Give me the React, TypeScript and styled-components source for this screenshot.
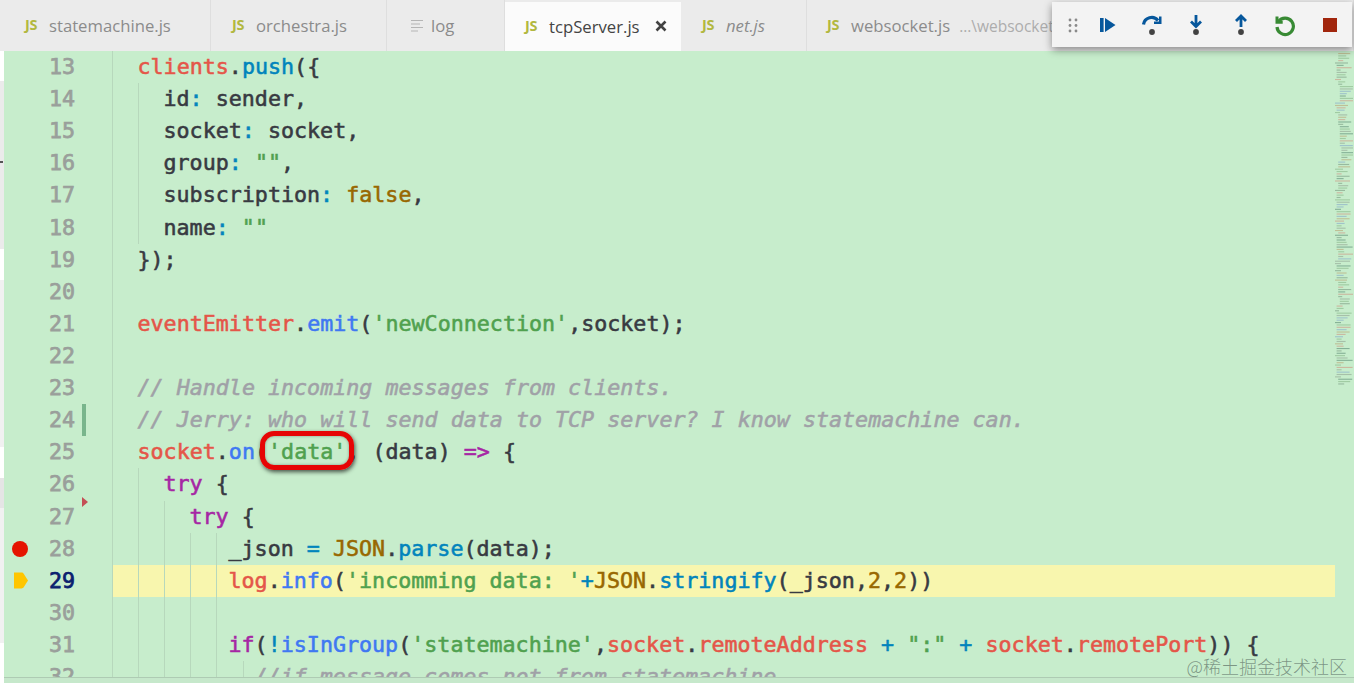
import React from 'react';
import styled, { createGlobalStyle } from 'styled-components';

const GlobalStyle = createGlobalStyle`
  html, body {
    margin: 0;
    padding: 0;
    background: #c7edcc;
    overflow: hidden;
  }
`;

const Page = styled.div`
  position: relative;
  width: 1354px;
  height: 683px;
  display: flex;
  flex-direction: column;
  overflow: hidden;
`;

const TabBar = styled.div`
  height: 51px;
  flex: none;
  display: flex;
  background: #ebebeb;
`;

const Tab = styled.div<{ $width: number; $active?: boolean; $pad?: number }>`
  width: ${(p) => p.$width}px;
  box-sizing: border-box;
  padding: 0 0 0 ${(p) => p.$pad ?? 21}px;
  margin-top: ${(p) => (p.$active ? 2 : 0)}px;
  flex: none;
  display: flex;
  align-items: center;
  overflow: hidden;
  white-space: nowrap;
  background: ${(p) => (p.$active ? '#fbfbfb' : '#ebebeb')};
  border-right: 1px solid ${(p) => (p.$active ? '#fbfbfb' : '#dedede')};
  font-family: 'Open Sans', sans-serif;
  font-size: 16.7px;
  color: ${(p) => (p.$active ? '#444444' : '#8b8b8b')};
`;

const JsBadge = styled.span`
  width: 14px;
  margin-right: 10px;
  font-family: 'Open Sans', sans-serif;
  font-size: 14.5px;
  font-weight: 700;
  letter-spacing: -0.4px;
  color: #b2b83f;
  position: relative;
  top: -1px;
`;

const TabName = styled.span<{ $italic?: boolean }>`
  font-style: ${(p) => (p.$italic ? 'italic' : 'normal')};
`;

const TabPath = styled.span`
  margin-left: 9px;
  font-size: 15.5px;
  color: #adadad;
`;

const CloseIcon = styled.svg`
  width: 12px;
  height: 12px;
  margin-left: 15px;
  flex: none;
  position: relative;
  top: -1px;
`;

const LogIcon = styled.svg`
  width: 12px;
  height: 14px;
  margin-right: 8px;
  flex: none;
`;

const Workbench = styled.div`
  flex: 1;
  min-height: 0;
  display: flex;
  position: relative;
`;

const SideStrip = styled.div`
  width: 4px;
  flex: none;
  position: relative;
  display: flex;
  flex-direction: column;
`;

const StripPart = styled.div<{ $h: number; $c: string }>`
  flex: none;
  height: ${(p) => p.$h}px;
  background: ${(p) => p.$c};
`;

const StripTick = styled.div`
  position: absolute;
  left: 0;
  top: 110px;
  width: 3px;
  height: 2px;
  background: #555555;
`;

const EditorColumn = styled.div`
  flex: 1;
  min-width: 0;
  display: flex;
  flex-direction: column;
`;

const Editor = styled.div`
  height: 626px;
  flex: none;
  display: flex;
  overflow: hidden;
  background: #c7edcc;
`;

const BottomEdge = styled.div`
  flex: 1;
  background: #c6e8cb;
  border-top: 1px solid #aecbb3;
`;

const Lines = styled.div`
  flex: 1;
  min-width: 0;
`;

const Row = styled.div`
  height: 32.11px;
  display: flex;
  position: relative;
`;

const Gutter = styled.div`
  width: 107.5px;
  flex: none;
  display: flex;
  align-items: stretch;
`;

const GlyphCell = styled.div`
  width: 33px;
  flex: none;
  display: flex;
  align-items: center;
  justify-content: center;
  padding-right: 1px;
  box-sizing: border-box;
`;

const BreakpointDot = styled.div`
  width: 16px;
  height: 16px;
  border-radius: 50%;
  background: #e51400;
`;

const CurrentArrow = styled.svg`
  width: 16px;
  height: 17px;
  position: relative;
  left: 1px;
`;

const LineNumber = styled.div<{ $current?: boolean }>`
  width: 38px;
  flex: none;
  text-align: right;
  font-family: 'DejaVu Sans Mono', monospace;
  font-size: 21.65px;
  line-height: 32px;
  color: ${(p) => (p.$current ? '#0b216f' : '#9a9f9b')};
  -webkit-text-stroke: 0.75px ${(p) => (p.$current ? '#0b216f' : '#9a9f9b')};
`;

const MarkerCell = styled.div`
  flex: 1;
  padding-left: 7px;
  position: relative;
`;

const ChangeBar = styled.div`
  width: 4px;
  height: 100%;
  background: #79b58c;
`;

const FoldedMark = styled.div`
  position: absolute;
  left: 7px;
  bottom: -6px;
  width: 0;
  height: 0;
  border-left: 6px solid #c44f55;
  border-top: 5.5px solid transparent;
  border-bottom: 5.5px solid transparent;
  z-index: 2;
`;

const Code = styled.div<{ $current?: boolean }>`
  flex: 1;
  min-width: 0;
  display: flex;
  white-space: pre;
  font-family: 'DejaVu Sans Mono', monospace;
  font-size: 21.68px;
  line-height: 32px;
  background: ${(p) => (p.$current ? '#f8f6ae' : 'transparent')};
  -webkit-text-stroke: 0.55px currentColor;
`;

const Indent = styled.span<{ $w: number }>`
  width: ${(p) => p.$w}px;
  flex: none;
  box-sizing: border-box;
  border-left: 1px solid #b7d8bc;
`;

const colors: Record<string, string> = {
  red: '#e45649',
  blue: '#4078f2',
  teal: '#0184bc',
  cyan: '#0184bc',
  green: '#50a14f',
  purple: '#a626a4',
  gold: '#986801',
  text: '#383a42',
  comment: '#a0a1a7',
};

const Token = styled.span<{ $kind: string }>`
  color: ${(p) => colors[p.$kind]};
  font-style: ${(p) => (p.$kind === 'comment' ? 'italic' : 'normal')};
`;

const Minimap = styled.svg`
  width: 19px;
  height: 626px;
  flex: none;
  display: block;
`;

const DebugToolbar = styled.div`
  position: absolute;
  left: 1052px;
  top: 2px;
  width: 300px;
  height: 45px;
  box-sizing: border-box;
  padding-left: 9px;
  display: flex;
  align-items: center;
  background: #f3f3f3;
  box-shadow: 0 3px 8px rgba(0, 0, 0, 0.42);
  z-index: 5;
`;

const ToolButton = styled.svg`
  width: 24px;
  height: 24px;
  flex: none;
  margin-right: 20.7px;
  position: relative;
  top: 0.5px;
`;

const GripIcon = styled.svg`
  width: 24px;
  height: 24px;
  flex: none;
  margin-right: 10px;
`;

const Callout = styled.div`
  position: absolute;
  left: 260px;
  top: 431px;
  width: 94px;
  height: 39px;
  box-sizing: border-box;
  border: 5px solid #e60505;
  border-radius: 14px;
  box-shadow: 1px 2px 4px rgba(0, 0, 0, 0.65), inset 0 0 3px rgba(0, 0, 0, 0.35);
  z-index: 3;
`;

const Watermark = styled.div`
  position: absolute;
  right: 7px;
  bottom: 5px;
  font-family: 'Noto Sans CJK SC', sans-serif;
  font-size: 18px;
  font-weight: 300;
  line-height: 24px;
  color: rgba(95, 115, 105, 0.72);
  z-index: 4;
`;

type Tok = [string, string];

interface Line {
  n: number;
  indent: number[];
  toks: Tok[];
  current?: boolean;
  breakpoint?: boolean;
  changed?: boolean;
  folded?: boolean;
}

const deep = [26, 26, 26, 26, 13];

const lines: Line[] = [
  { n: 13, indent: [26], toks: [['red', 'clients'], ['text', '.'], ['teal', 'push'], ['text', '({']] },
  { n: 14, indent: [26, 26], toks: [['text', 'id'], ['cyan', ':'], ['text', ' sender,']] },
  { n: 15, indent: [26, 26], toks: [['text', 'socket'], ['cyan', ':'], ['text', ' socket,']] },
  { n: 16, indent: [26, 26], toks: [['text', 'group'], ['cyan', ':'], ['text', ' '], ['green', '""'], ['text', ',']] },
  { n: 17, indent: [26, 26], toks: [['text', 'subscription'], ['cyan', ':'], ['text', ' '], ['gold', 'false'], ['text', ',']] },
  { n: 18, indent: [26, 26], toks: [['text', 'name'], ['cyan', ':'], ['text', ' '], ['green', '""']] },
  { n: 19, indent: [26], toks: [['text', '});']] },
  { n: 20, indent: [26], toks: [] },
  { n: 21, indent: [26], toks: [['red', 'eventEmitter'], ['text', '.'], ['blue', 'emit'], ['text', '('], ['green', "'newConnection'"], ['text', ',socket);']] },
  { n: 22, indent: [26], toks: [] },
  { n: 23, indent: [26], toks: [['comment', '// Handle incoming messages from clients.']] },
  { n: 24, indent: [26], changed: true, toks: [['comment', '// Jerry: who will send data to TCP server? I know statemachine can.']] },
  { n: 25, indent: [26], toks: [['red', 'socket'], ['text', '.'], ['blue', 'on'], ['text', '('], ['green', "'data'"], ['text', ', (data) '], ['purple', '=>'], ['text', ' {']] },
  { n: 26, indent: [26, 26], folded: true, toks: [['purple', 'try'], ['text', ' {']] },
  { n: 27, indent: [26, 26, 26], toks: [['purple', 'try'], ['text', ' {']] },
  { n: 28, indent: deep, breakpoint: true, toks: [['text', '_json '], ['cyan', '='], ['text', ' '], ['gold', 'JSON'], ['text', '.'], ['teal', 'parse'], ['text', '(data);']] },
  { n: 29, indent: deep, current: true, toks: [['red', 'log'], ['text', '.'], ['blue', 'info'], ['text', '('], ['green', "'incomming data: '"], ['cyan', '+'], ['gold', 'JSON'], ['text', '.'], ['teal', 'stringify'], ['text', '(_json,'], ['gold', '2'], ['text', ','], ['gold', '2'], ['text', '))']] },
  { n: 30, indent: deep, toks: [] },
  { n: 31, indent: deep, toks: [['purple', 'if'], ['text', '('], ['cyan', '!'], ['blue', 'isInGroup'], ['text', '('], ['green', "'statemachine'"], ['text', ','], ['red', 'socket'], ['text', '.'], ['red', 'remoteAddress'], ['text', ' '], ['cyan', '+'], ['text', ' '], ['green', '":"'], ['text', ' '], ['cyan', '+'], ['text', ' '], ['red', 'socket'], ['text', '.'], ['red', 'remotePort'], ['text', ')) {']] },
  { n: 32, indent: [26, 26, 26, 26, 27, 12], toks: [['comment', '//if message comes not from statemachine']] },
];

// blocks of the minimap: [indent, length], 0 length means a blank gap
const miniBlocks = [
  [2, 4], [0, 1], [1, 6], [0, 1], [2, 2], [3, 7], [0, 2], [1, 2], [0, 1], [2, 5], [3, 9], [4, 6], [2, 3], [0, 1],
  [1, 4], [0, 1], [2, 3], [0, 1], [1, 3], [0, 1], [1, 3], [0, 1], [1, 4], [0, 1], [1, 3], [0, 1], [2, 1], [0, 1],
  [1, 6], [2, 4], [0, 2], [1, 2], [0, 1], [1, 3], [0, 1], [2, 7], [3, 3], [1, 2], [0, 1], [1, 4], [0, 1], [1, 5],
  [0, 1], [1, 2], [0, 1], [1, 4], [0, 1], [1, 3], [0, 1], [1, 4], [0, 1], [2, 3],
];
const miniColors = ['#6f8f78', '#4f7f6a', '#d08a7a', '#7da0c8', '#7fae7f', '#8a9a8c', '#b79a6a'];

const miniRects = () => {
  const rects: { x: number; y: number; w: number; c: string }[] = [];
  let y = 2;
  let seed = 7;
  miniBlocks.forEach(([indent, len]) => {
    for (let i = 0; i < len; i++) {
      seed = (seed * 31 + 11) % 97;
      const x = indent * 1.6;
      const w = Math.min(4 + (seed % 13), 18 - x);
      rects.push({ x, y, w, c: miniColors[seed % miniColors.length] });
      y += 2.36;
    }
    if (len === 0) y += 2.6;
  });
  return rects;
};

const App = () => (
  <Page>
    <GlobalStyle />
    <TabBar>
      <Tab $width={211} $pad={25}>
        <JsBadge>JS</JsBadge>
        <TabName>statemachine.js</TabName>
      </Tab>
      <Tab $width={176} $pad={21}>
        <JsBadge>JS</JsBadge>
        <TabName>orchestra.js</TabName>
      </Tab>
      <Tab $width={118} $pad={24}>
        <LogIcon viewBox="0 0 12 14">
          <path d="M0 1.5h12M0 5h9M0 8.5h12M0 12h7" stroke="#b5b5b5" strokeWidth="1.2" fill="none" />
        </LogIcon>
        <TabName>log</TabName>
      </Tab>
      <Tab $width={176} $active $pad={20}>
        <JsBadge>JS</JsBadge>
        <TabName>tcpServer.js</TabName>
        <CloseIcon viewBox="0 0 12 12">
          <path d="M1.5 1.5l9 9M10.5 1.5l-9 9" stroke="#424242" strokeWidth="2.6" fill="none" />
        </CloseIcon>
      </Tab>
      <Tab $width={126} $pad={21}>
        <JsBadge>JS</JsBadge>
        <TabName $italic>net.js</TabName>
      </Tab>
      <Tab $width={547} $pad={20}>
        <JsBadge>JS</JsBadge>
        <TabName>websocket.js</TabName>
        <TabPath>...\websocket</TabPath>
      </Tab>
    </TabBar>

    <Workbench>
      <SideStrip>
        <StripPart $h={30} $c="#ffffff" />
        <StripPart $h={168} $c="#ebebeb" />
        <StripPart $h={31} $c="#ffffff" />
        <StripPart $h={167} $c="#f1f1f1" />
        <StripPart $h={31} $c="#ffffff" />
        <StripPart $h={30} $c="#e5e5e5" />
        <StripPart $h={135} $c="#f1f1f1" />
        <StripPart $h={40} $c="#ffffff" />
        <StripTick />
      </SideStrip>
      <EditorColumn>
        <Editor>
          <Lines>
            {lines.map((line) => (
              <Row key={line.n}>
                <Gutter>
                  <GlyphCell>
                    {line.breakpoint && <BreakpointDot />}
                    {line.current && (
                      <CurrentArrow viewBox="0 0 16 16">
                        <path d="M1 0h7.5c1 0 1.7.5 2.2 1.2L15 8l-4.3 6.8c-.5.7-1.2 1.2-2.2 1.2H1z" fill="#ffc600" />
                      </CurrentArrow>
                    )}
                  </GlyphCell>
                  <LineNumber $current={line.current}>{line.n}</LineNumber>
                  <MarkerCell>
                    {line.changed && <ChangeBar />}
                    {line.folded && <FoldedMark />}
                  </MarkerCell>
                </Gutter>
                <Code $current={line.current}>
                  {line.indent.map((w, i) => (
                    <Indent key={i} $w={w} />
                  ))}
                  <span>
                    {line.toks.map(([kind, text], i) => (
                      <Token key={i} $kind={kind}>
                        {text}
                      </Token>
                    ))}
                  </span>
                </Code>
              </Row>
            ))}
          </Lines>
          <Minimap viewBox="0 0 19 626">
            {miniRects().map((r, i) => (
              <rect key={i} x={r.x} y={r.y} width={r.w} height={1.1} fill={r.c} opacity={0.55} />
            ))}
          </Minimap>
        </Editor>
        <BottomEdge />
      </EditorColumn>
    </Workbench>

    <DebugToolbar>
      <GripIcon viewBox="0 0 24 24">
        <g fill="#8a8a8a">
          <circle cx="9" cy="7" r="1.4" />
          <circle cx="15" cy="7" r="1.4" />
          <circle cx="9" cy="12.5" r="1.4" />
          <circle cx="15" cy="12.5" r="1.4" />
          <circle cx="9" cy="18" r="1.4" />
          <circle cx="15" cy="18" r="1.4" />
        </g>
      </GripIcon>
      <ToolButton viewBox="0 0 24 24">
        <path d="M5 5h3.6v14H5zM10 5l10.5 7L10 19z" fill="#06579c" />
      </ToolButton>
      <ToolButton viewBox="0 0 24 24">
        <path d="M3.5 11.5A8.2 8.2 0 0 1 18 7.5" stroke="#06579c" strokeWidth="3.2" fill="none" />
        <path d="M21.5 3.5v7.5H14v-2.6h5V3.5z" fill="#06579c" />
        <circle cx="12" cy="19" r="2.9" fill="#424242" />
      </ToolButton>
      <ToolButton viewBox="0 0 24 24">
        <path d="M12 2v11M7 8.5l5 5 5-5" stroke="#06579c" strokeWidth="2.8" fill="none" />
        <circle cx="12" cy="19" r="2.9" fill="#424242" />
      </ToolButton>
      <ToolButton viewBox="0 0 24 24">
        <path d="M12 14V3M7 8l5-5 5 5" stroke="#06579c" strokeWidth="2.8" fill="none" />
        <circle cx="12" cy="19" r="2.9" fill="#424242" />
      </ToolButton>
      <ToolButton viewBox="0 0 24 24">
        <path d="M4.5 8.5A8.2 8.2 0 1 1 3 14" stroke="#388a34" strokeWidth="3.2" fill="none" />
        <path d="M1.5 3.5h3v4.2h4.2v3H1.5z" fill="#388a34" />
      </ToolButton>
      <ToolButton viewBox="0 0 24 24">
        <rect x="5" y="5" width="14" height="14" fill="#a1260d" />
      </ToolButton>
    </DebugToolbar>

    <Callout />
    <Watermark>@稀土掘金技术社区</Watermark>
  </Page>
);

export default App;
